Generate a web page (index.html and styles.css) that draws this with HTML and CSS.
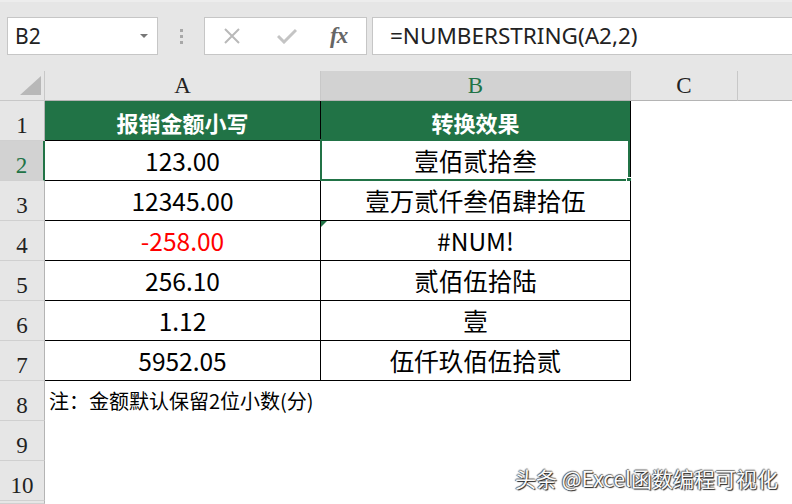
FILE: index.html
```html
<!DOCTYPE html>
<html lang="zh-CN">
<head>
<meta charset="utf-8">
<title>NUMBERSTRING</title>
<link rel="stylesheet" href="styles.css">
</head>
<body>
<div class="app">
  <div class="toolbar">
    <div class="namebox">
      <span class="name">B2</span>
      <span class="drop"></span>
    </div>
    <div class="grip"><i></i><i></i><i></i></div>
    <div class="fxbox">
      <svg class="ic-x" width="18" height="16" viewBox="0 0 18 16"><path d="M2 1 L16 15 M16 1 L2 15" stroke="#b9b9b9" stroke-width="2" fill="none"/></svg>
      <svg class="ic-ok" width="20" height="16" viewBox="0 0 20 16"><path d="M1 8 L7 14 L19 2" stroke="#c4c4c4" stroke-width="3" fill="none"/></svg>
      <span class="fx">fx</span>
    </div>
    <div class="formula">=NUMBERSTRING(A2,2)</div>
  </div>

  <div class="sheet">
    <div class="corner"><span class="tri"></span></div>
    <div class="colh">A</div>
    <div class="colh sel-col">B</div>
    <div class="colh">C</div>
    <div class="colh last"></div>

    <div class="rowh">1</div>
    <div class="cell t hd">报销金额小写</div>
    <div class="cell t hd">转换效果</div>
    <div class="cell"></div>
    <div class="cell"></div>

    <div class="rowh sel-row">2</div>
    <div class="cell t">123.00</div>
    <div class="cell t active"><span>壹佰贰拾叁</span><div class="sel"><b class="handle"></b></div></div>
    <div class="cell"></div>
    <div class="cell"></div>

    <div class="rowh">3</div>
    <div class="cell t">12345.00</div>
    <div class="cell t">壹万贰仟叁佰肆拾伍</div>
    <div class="cell"></div>
    <div class="cell"></div>

    <div class="rowh">4</div>
    <div class="cell t neg">-258.00</div>
    <div class="cell t err"><span class="flag"></span>#NUM!</div>
    <div class="cell"></div>
    <div class="cell"></div>

    <div class="rowh">5</div>
    <div class="cell t">256.10</div>
    <div class="cell t">贰佰伍拾陆</div>
    <div class="cell"></div>
    <div class="cell"></div>

    <div class="rowh">6</div>
    <div class="cell t">1.12</div>
    <div class="cell t">壹</div>
    <div class="cell"></div>
    <div class="cell"></div>

    <div class="rowh">7</div>
    <div class="cell t">5952.05</div>
    <div class="cell t">伍仟玖佰伍拾贰</div>
    <div class="cell"></div>
    <div class="cell"></div>

    <div class="rowh">8</div>
    <div class="cell note">注：金额默认保留2位小数(分)</div>
    <div class="cell"></div>
    <div class="cell"></div>
    <div class="cell"></div>

    <div class="rowh">9</div>
    <div class="cell"></div>
    <div class="cell"></div>
    <div class="cell"></div>
    <div class="cell"></div>

    <div class="rowh">10</div>
    <div class="cell"></div>
    <div class="cell"></div>
    <div class="cell"></div>
    <div class="cell"></div>

    <div class="rowh"></div>
    <div class="cell"></div>
    <div class="cell"></div>
    <div class="cell"></div>
    <div class="cell"></div>
  </div>

  <div class="watermark">头条 @Excel函数编程可视化</div>
</div>
</body>
</html>
```

FILE: styles.css
```css
* { box-sizing: border-box; }
html, body { margin: 0; padding: 0; }
body {
  width: 792px;
  height: 504px;
  overflow: hidden;
  background: #e6e6e6;
  font-family: "Noto Sans CJK SC", "Noto Sans", sans-serif;
}
.app { position: relative; width: 792px; height: 504px; }

/* toolbar */
.toolbar {
  height: 71px;
  display: flex;
  align-items: flex-start;
  padding: 17px 0 0 7px;
  border-top: 2px solid #ededed;
  background: #e6e6e6;
}
.namebox {
  width: 151px;
  height: 38px;
  background: #fff;
  border: 1px solid #c6c6c6;
  display: flex;
  align-items: center;
  justify-content: space-between;
  padding: 0 9px 0 7px;
  margin-top: -2px;
}
.name {
  font-family: "Noto Sans", sans-serif;
  font-size: 21px;
  color: #222;
}
.drop {
  width: 0; height: 0;
  border-left: 4px solid transparent;
  border-right: 4px solid transparent;
  border-top: 4px solid #777;
}
.grip {
  width: 46px;
  height: 38px;
  margin-top: -2px;
  display: flex;
  flex-direction: column;
  align-items: center;
  justify-content: center;
  gap: 3px;
}
.grip i { display: block; width: 3px; height: 3px; background: #a8a8a8; }
.fxbox {
  width: 163px;
  height: 38px;
  margin-top: -2px;
  background: #fff;
  border: 1px solid #c6c6c6;
  display: flex;
  align-items: center;
  padding-left: 18px;
}
.ic-x { margin-right: 36px; }
.ic-ok { margin-right: 33px; }
.fx {
  font-family: "Liberation Serif", serif;
  font-style: italic;
  font-weight: bold;
  font-size: 23px;
  color: #666;
  letter-spacing: -1px;
}
.formula {
  flex: 1;
  height: 38px;
  margin-top: -2px;
  margin-left: 5px;
  margin-right: -2px;
  background: #fff;
  border: 1px solid #c6c6c6;
  padding-left: 17px;
  font-family: "Noto Sans", sans-serif;
  font-size: 22.5px;
  line-height: 35px;
  color: #222;
}

/* sheet */
.sheet {
  display: grid;
  grid-template-columns: 45px 276px 310px 107px 1fr;
  grid-template-rows: 30px repeat(10, 40px) 1fr;
  height: 433px;
  background: #fff;
}
.corner {
  background: #e6e6e6;
  border-right: 1px solid #c8c8c8;
  border-bottom: 1px solid #c8c8c8;
  position: relative;
}
.tri {
  position: absolute;
  right: 3px;
  bottom: 5px;
  width: 0; height: 0;
  border-left: 21px solid transparent;
  border-bottom: 19px solid #b8b8b8;
}
.colh {
  background: #e6e6e6;
  border-right: 1px solid #c8c8c8;
  border-bottom: 1px solid #b4b4b4;
  display: flex;
  align-items: flex-end;
  justify-content: center;
  padding-bottom: 2px;
  font-family: "Liberation Serif", serif;
  font-size: 23px;
  line-height: 24px;
  color: #222;
}
.colh.last { border-right: none; }
.sel-col { background: #d2d2d2; color: #217346; }
.rowh {
  background: #e6e6e6;
  border-right: 1px solid #b4b4b4;
  border-bottom: 1px solid #d0d0d0;
  display: flex;
  align-items: flex-end;
  justify-content: center;
  padding-bottom: 2px;
  font-family: "Liberation Serif", serif;
  font-size: 23px;
  line-height: 24px;
  color: #222;
}
.sel-row { background: #d2d2d2; color: #217346; border-right: 2px solid #217346; }
.cell { background: #fff; position: relative; }
.t {
  border-right: 1px solid #000;
  border-bottom: 1px solid #000;
  display: flex;
  align-items: center;
  justify-content: center;
  font-size: 24.5px;
  color: #000;
  white-space: nowrap;
}
.hd {
  background: #217346;
  color: #fff;
  font-weight: bold;
  font-size: 22px;
  padding-top: 3px;
}
.neg { color: #ff0000; }
.sel {
  position: absolute;
  left: -1px;
  top: -2px;
  right: 0;
  bottom: -1px;
  border: 2px solid #217346;
}
.handle {
  position: absolute;
  right: -5px;
  bottom: -5px;
  width: 7px;
  height: 7px;
  background: #217346;
  border: 1px solid #fff;
}
.flag {
  position: absolute;
  left: 0;
  top: 0;
  width: 0; height: 0;
  border-top: 6px solid #217346;
  border-right: 6px solid transparent;
}
.note {
  white-space: nowrap;
  overflow: visible;
  padding: 5px 0 0 4px;
  font-size: 20px;
  color: #000;
  z-index: 1;
}

.watermark {
  position: absolute;
  left: 515px;
  top: 463px;
  font-family: "Noto Sans CJK SC", sans-serif;
  font-size: 21px;
  color: #fafafa;
  text-shadow: 1px 1px 1px #222, -1px 0 1px #555, 0 -1px 1px #777;
  white-space: nowrap;
}
```
